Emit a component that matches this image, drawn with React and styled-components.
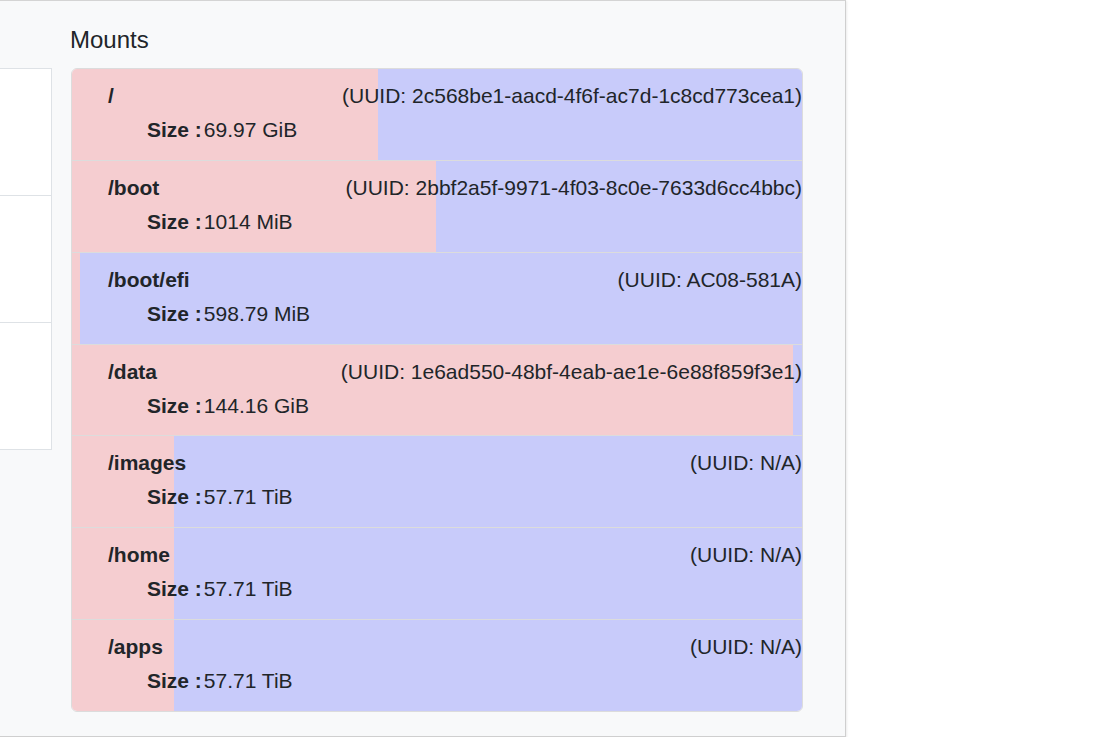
import React from 'react';
import styled, { createGlobalStyle } from 'styled-components';

const GlobalStyle = createGlobalStyle`
  body {
    margin: 0;
    background: #ffffff;
    font-family: "Liberation Sans", Arial, sans-serif;
    color: #212529;
  }
`;

const Panel = styled.div`
  width: 845px;
  height: 711px;
  box-sizing: content-box;
  background: #f8f9fa;
  border-top: 1px solid #d4d4d4;
  border-right: 1px solid #cfcfcf;
  border-bottom: 1px solid #cfcfcf;
  box-shadow: 1px 1px 2px rgba(0, 0, 0, 0.08);
  display: grid;
  grid-template-columns: 52px 732px;
  grid-template-rows: auto 1fr;
  column-gap: 19px;
  padding-top: 24px;
`;

const Heading = styled.h5`
  grid-column: 2;
  grid-row: 1;
  margin: 0 0 14px -1px;
  font-size: 24px;
  font-weight: 400;
  line-height: 29px;
`;

const SideCard = styled.ul`
  grid-column: 1;
  grid-row: 2;
  align-self: start;
  margin: 0;
  padding: 0;
  list-style: none;
  background: #ffffff;
  border: 1px solid #dee2e6;
  border-left: none;
`;

const SideItem = styled.li`
  height: 126px;
  & + & {
    border-top: 1px solid #dee2e6;
  }
`;

const MountList = styled.ul`
  grid-column: 2;
  grid-row: 2;
  align-self: start;
  margin: 0;
  padding: 0;
  list-style: none;
  border: 1px solid #dcdcdc;
  border-radius: 6px;
  overflow: hidden;
`;

const MountItem = styled.li`
  padding: 13px 0 16.85px 36px;
  background: linear-gradient(
    to right,
    #f5cdd0 0%,
    #f5cdd0 ${(p) => p.$used}%,
    #c8cbfa ${(p) => p.$used}%,
    #c8cbfa 100%
  );
  font-size: 21px;
  line-height: 27px;
  & + & {
    border-top: 1px solid #dcdcdc;
  }
`;

const TopLine = styled.div`
  display: flex;
  justify-content: space-between;
`;

const Path = styled.span`
  font-weight: 700;
`;

const Uuid = styled.span`
  padding-right: 0;
`;

const SizeLine = styled.div`
  margin: 7px 0 0 39px;
`;

const Label = styled.b`
  font-weight: 700;
  margin-right: 2px;
`;

const mounts = [
  { path: '/', uuid: '2c568be1-aacd-4f6f-ac7d-1c8cd773cea1', size: '69.97 GiB', used: 41.9 },
  { path: '/boot', uuid: '2bbf2a5f-9971-4f03-8c0e-7633d6cc4bbc', size: '1014 MiB', used: 49.9 },
  { path: '/boot/efi', uuid: 'AC08-581A', size: '598.79 MiB', used: 1.1 },
  { path: '/data', uuid: '1e6ad550-48bf-4eab-ae1e-6e88f859f3e1', size: '144.16 GiB', used: 98.7 },
  { path: '/images', uuid: 'N/A', size: '57.71 TiB', used: 14 },
  { path: '/home', uuid: 'N/A', size: '57.71 TiB', used: 14 },
  { path: '/apps', uuid: 'N/A', size: '57.71 TiB', used: 14 },
];

export default function App() {
  return (
    <>
      <GlobalStyle />
      <Panel>
        <Heading>Mounts</Heading>
        <SideCard>
          <SideItem />
          <SideItem />
          <SideItem />
        </SideCard>
        <MountList>
          {mounts.map((m) => (
            <MountItem key={m.path} $used={m.used}>
              <TopLine>
                <Path>{m.path}</Path>
                <Uuid>(UUID: {m.uuid})</Uuid>
              </TopLine>
              <SizeLine>
                <Label>Size :</Label>
                {m.size}
              </SizeLine>
            </MountItem>
          ))}
        </MountList>
      </Panel>
    </>
  );
}
